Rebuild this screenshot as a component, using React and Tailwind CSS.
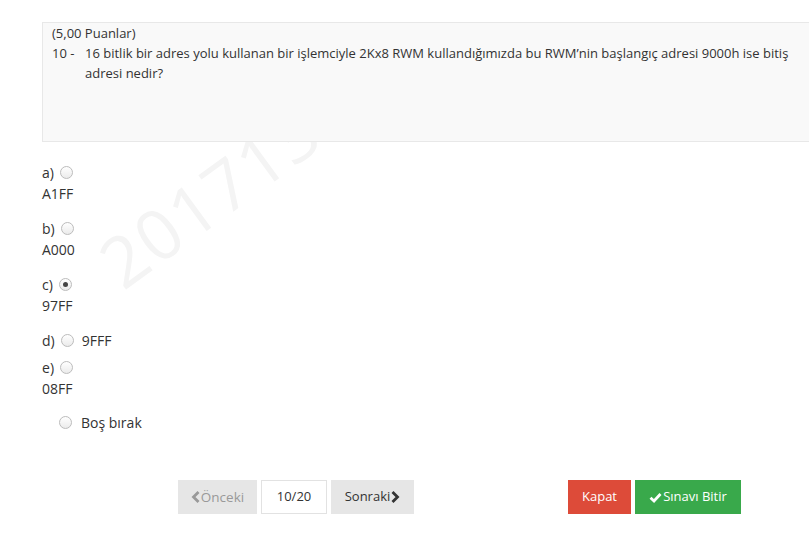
import React from "react";

const Radio = ({ checked }) => (
  <span className="inline-flex h-[13px] w-[13px] items-center justify-center rounded-full border border-[#bcbcbc] bg-linear-to-b from-white to-[#ebebeb]">
    {checked && <span className="h-[5px] w-[5px] rounded-full bg-[#444]" />}
  </span>
);

const ChevronLeft = () => (
  <svg width="9" height="12" viewBox="0 0 9 12" className="mr-[1px]">
    <path d="M7.5 1 L2.5 6 L7.5 11" fill="none" stroke="currentColor" strokeWidth="2.8" />
  </svg>
);

const ChevronRight = () => (
  <svg width="9" height="12" viewBox="0 0 9 12" className="ml-[1px]">
    <path d="M1.5 1 L6.5 6 L1.5 11" fill="none" stroke="currentColor" strokeWidth="2.8" />
  </svg>
);

const Check = () => (
  <svg width="13" height="11" viewBox="0 0 13 11" className="mr-[1px]">
    <path d="M1.5 5.8 L5 9 L11.5 2" fill="none" stroke="currentColor" strokeWidth="2.8" />
  </svg>
);

const options = [
  { key: "a", answer: "A1FF" },
  { key: "b", answer: "A000" },
  { key: "c", answer: "97FF", checked: true },
  { key: "d", answer: "9FFF", inline: true },
  { key: "e", answer: "08FF" },
];

export default function App() {
  return (
    <div className="relative h-[553px] w-[809px] overflow-hidden bg-white font-['Open_Sans',sans-serif] text-[13px] text-[#333]">
      {/* watermark */}
      <div
        aria-hidden
        className="pointer-events-none absolute left-[128px] top-[228px] origin-bottom-left -rotate-[36deg] select-none text-[70px] leading-[70px] tracking-[2px] text-[#f4f4f4]"
      >
        201713101
      </div>

      <div className="relative pt-[22px]">
        <div className="ml-[42px] h-[120px] w-[800px] border border-[#e8e8e8] bg-[#f9f9f9] pl-[9px] leading-[20px]">
          <div>(5,00 Puanlar)</div>
          <div className="flex">
            <span className="w-[33px] shrink-0">10 -</span>
            <span className="w-[720px]">
              16 bitlik bir adres yolu kullanan bir işlemciyle 2Kx8 RWM kullandığımızda bu RWM’nin başlangıç adresi 9000h ise bitiş adresi nedir?
            </span>
          </div>
        </div>

        <div className="ml-[42px] mt-[19px] text-[14px]">
          {options.map((o) =>
            o.inline ? (
              <div key={o.key} className="mb-[4px] flex h-[23px] items-center">
                <span>{o.key})</span>
                <span className="ml-[6px] flex"><Radio /></span>
                <span className="ml-[8px]">{o.answer}</span>
              </div>
            ) : (
              <div key={o.key} className={o.key === "e" ? "" : "mb-[13px]"}>
                <div className="flex h-[23px] items-center">
                  <span>{o.key})</span>
                  <span className="ml-[6px] flex"><Radio checked={o.checked} /></span>
                </div>
                <div className="leading-[20px]">{o.answer}</div>
              </div>
            )
          )}

          <div className="mt-[12px] flex h-[23px] items-center pl-[17px]">
            <Radio />
            <span className="ml-[9px]">Boş bırak</span>
          </div>
        </div>

        <div className="mt-[46px] flex h-[34px]">
          <div className="ml-[178px] flex gap-[4px]">
            <button className="flex w-[79px] items-center justify-center bg-[#e6e6e6] text-[13.5px] text-[#999]">
              <ChevronLeft />Önceki
            </button>
            <div className="flex w-[66px] items-center justify-center border border-[#e2e2e2] bg-white">
              10/20
            </div>
            <button className="flex w-[83px] items-center justify-center bg-[#e6e6e6] text-[#333]">
              Sonraki<ChevronRight />
            </button>
          </div>
          <div className="ml-[154px] flex gap-[4px]">
            <button className="w-[63px] bg-[#dd4b39] text-white">Kapat</button>
            <button className="flex w-[106px] items-center justify-center bg-[#39a94b] text-white">
              <Check />Sınavı Bitir
            </button>
          </div>
        </div>
      </div>
    </div>
  );
}
